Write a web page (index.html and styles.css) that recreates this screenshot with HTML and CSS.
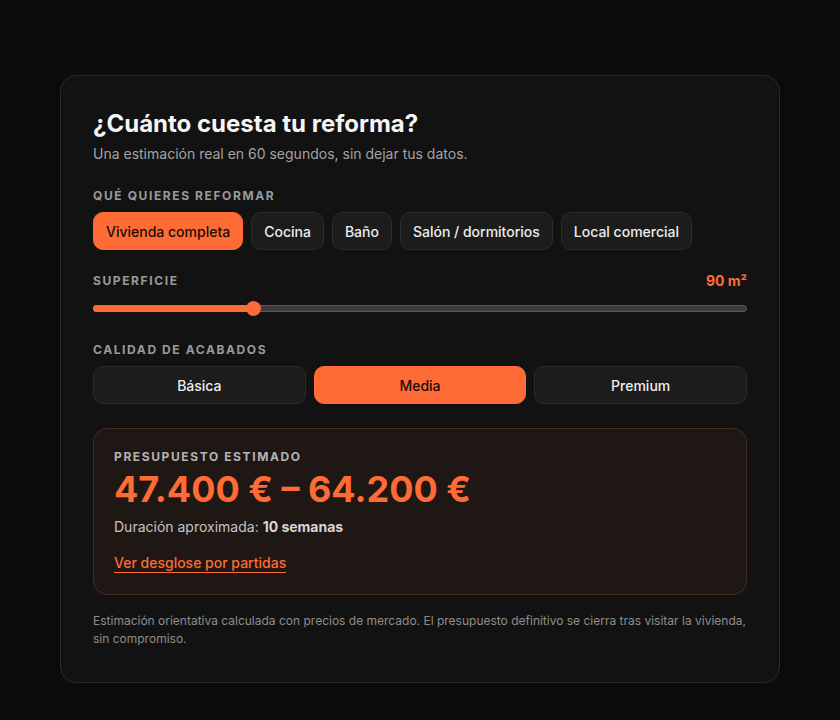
FILE: index.html
```html
<!DOCTYPE html>
<html lang="es">
<head>
<meta charset="utf-8">
<link rel="stylesheet" href="styles.css">
</head>
<body>
<div class="card">
  <h1 class="title">¿Cuánto cuesta tu reforma?</h1>
  <p class="sub">Una estimación real en 60 segundos, sin dejar tus datos.</p>

  <div class="label">Qué quieres reformar</div>
  <div class="chips">
    <button class="chip active">Vivienda completa</button>
    <button class="chip">Cocina</button>
    <button class="chip">Baño</button>
    <button class="chip">Salón / dormitorios</button>
    <button class="chip">Local comercial</button>
  </div>

  <div class="row-label">
    <div class="label">Superficie</div>
    <div class="value">90 m²</div>
  </div>
  <div class="slider">
    <div class="track"></div>
    <div class="fill" style="width:24.5%"></div>
    <div class="thumb" style="left:24.5%"></div>
  </div>

  <div class="label">Calidad de acabados</div>
  <div class="quality">
    <button class="qbtn">Básica</button>
    <button class="qbtn active">Media</button>
    <button class="qbtn">Premium</button>
  </div>

  <div class="result">
    <div class="label rlabel">Presupuesto estimado</div>
    <div class="price">47.400 € – 64.200 €</div>
    <div class="dur">Duración aproximada: <strong>10 semanas</strong></div>
    <a class="link" href="#">Ver desglose por partidas</a>
  </div>

  <p class="note">Estimación orientativa calculada con precios de mercado. El presupuesto definitivo se cierra tras visitar la vivienda, sin compromiso.</p>
</div>
</body>
</html>
```

FILE: styles.css
```css
* { box-sizing: border-box; }
html, body { margin: 0; padding: 0; }
body {
  background: #0b0b0b;
  font-family: Inter, "Noto Sans", "Liberation Sans", sans-serif;
  color: #f2f2f2;
  padding: 75px 60px 0 60px;
  height: 720px;
}
.card {
  width: 720px;
  background: #121212;
  border: 1px solid #2a2a2a;
  border-radius: 16px;
  padding: 33px 32px 32px 32px;
  height: 608px;
}
.title {
  margin: 0;
  font-size: 24px;
  font-weight: 700;
  line-height: 30px;
  color: #f5f5f5;
}
.sub {
  margin: 5px 0 0 0;
  font-size: 14px;
  line-height: 20px;
  color: #a3a3a3;
}
.label {
  font-size: 12px;
  font-weight: 700;
  letter-spacing: 1.6px;
  text-transform: uppercase;
  color: #9a9a9a;
  line-height: 16px;
}
.sub + .label { margin-top: 24px; }
.chips {
  display: flex;
  gap: 8px;
  margin-top: 8px;
}
.chip {
  font-family: inherit;
  font-size: 14px;
  font-weight: 500;
  height: 38px;
  padding: 0 12px;
  border-radius: 10px;
  background: #1c1c1c;
  border: 1px solid #2c2c2c;
  color: #ededed;
}
.chip.active {
  background: #ff6b35;
  border-color: #ff6b35;
  color: #1a0d07;
}
.row-label {
  display: flex;
  justify-content: space-between;
  align-items: center;
  margin-top: 23px;
}
.value {
  color: #ff6b35;
  font-weight: 700;
  font-size: 14px;
  line-height: 16px;
}
.slider {
  position: relative;
  height: 14px;
  margin-top: 12px;
}
.track {
  position: absolute;
  left: 0; right: 0; top: 4px;
  height: 7px;
  border-radius: 4px;
  background: #3c3c3c;
  border: 1px solid #585858;
}
.fill {
  position: absolute;
  left: 0; top: 4px;
  height: 7px;
  border-radius: 4px;
  background: #ff6b35;
}
.thumb {
  position: absolute;
  top: 0;
  width: 15px; height: 15px;
  margin-left: -7px;
  border-radius: 50%;
  background: #ff6b35;
}
.slider + .label { margin-top: 27px; }
.quality {
  display: grid;
  grid-template-columns: 1fr 1fr 1fr;
  gap: 8px;
  margin-top: 8px;
}
.qbtn {
  font-family: inherit;
  font-size: 14px;
  font-weight: 500;
  height: 38px;
  border-radius: 10px;
  background: #1c1c1c;
  border: 1px solid #2c2c2c;
  color: #ededed;
}
.qbtn.active {
  background: #ff6b35;
  border-color: #ff6b35;
  color: #1a0d07;
}
.result {
  margin-top: 24px;
  border: 1px solid #4a2d22;
  background: #1f1714;
  border-radius: 14px;
  padding: 20px 20px 20px 20px;
  height: 167px;
}
.rlabel { color: #b3b3b3; }
.price {
  color: #ff6b35;
  font-size: 36px;
  font-weight: 700;
  line-height: 40px;
  margin-top: 4px;
}
.dur {
  font-size: 14px;
  line-height: 20px;
  color: #c4c4c4;
  margin-top: 8px;
}
.dur strong { color: #d6d6d6; font-weight: 700; }
.link {
  display: inline-block;
  margin-top: 17px;
  color: #ff6b35;
  font-size: 14px;
  font-weight: 500;
  line-height: 18px;
  text-decoration: none;
  border-bottom: 1px solid #ff6b35;
}
.note {
  margin: 17px 0 0 0;
  font-size: 12px;
  line-height: 18px;
  color: #8e8e8e;
}
```
